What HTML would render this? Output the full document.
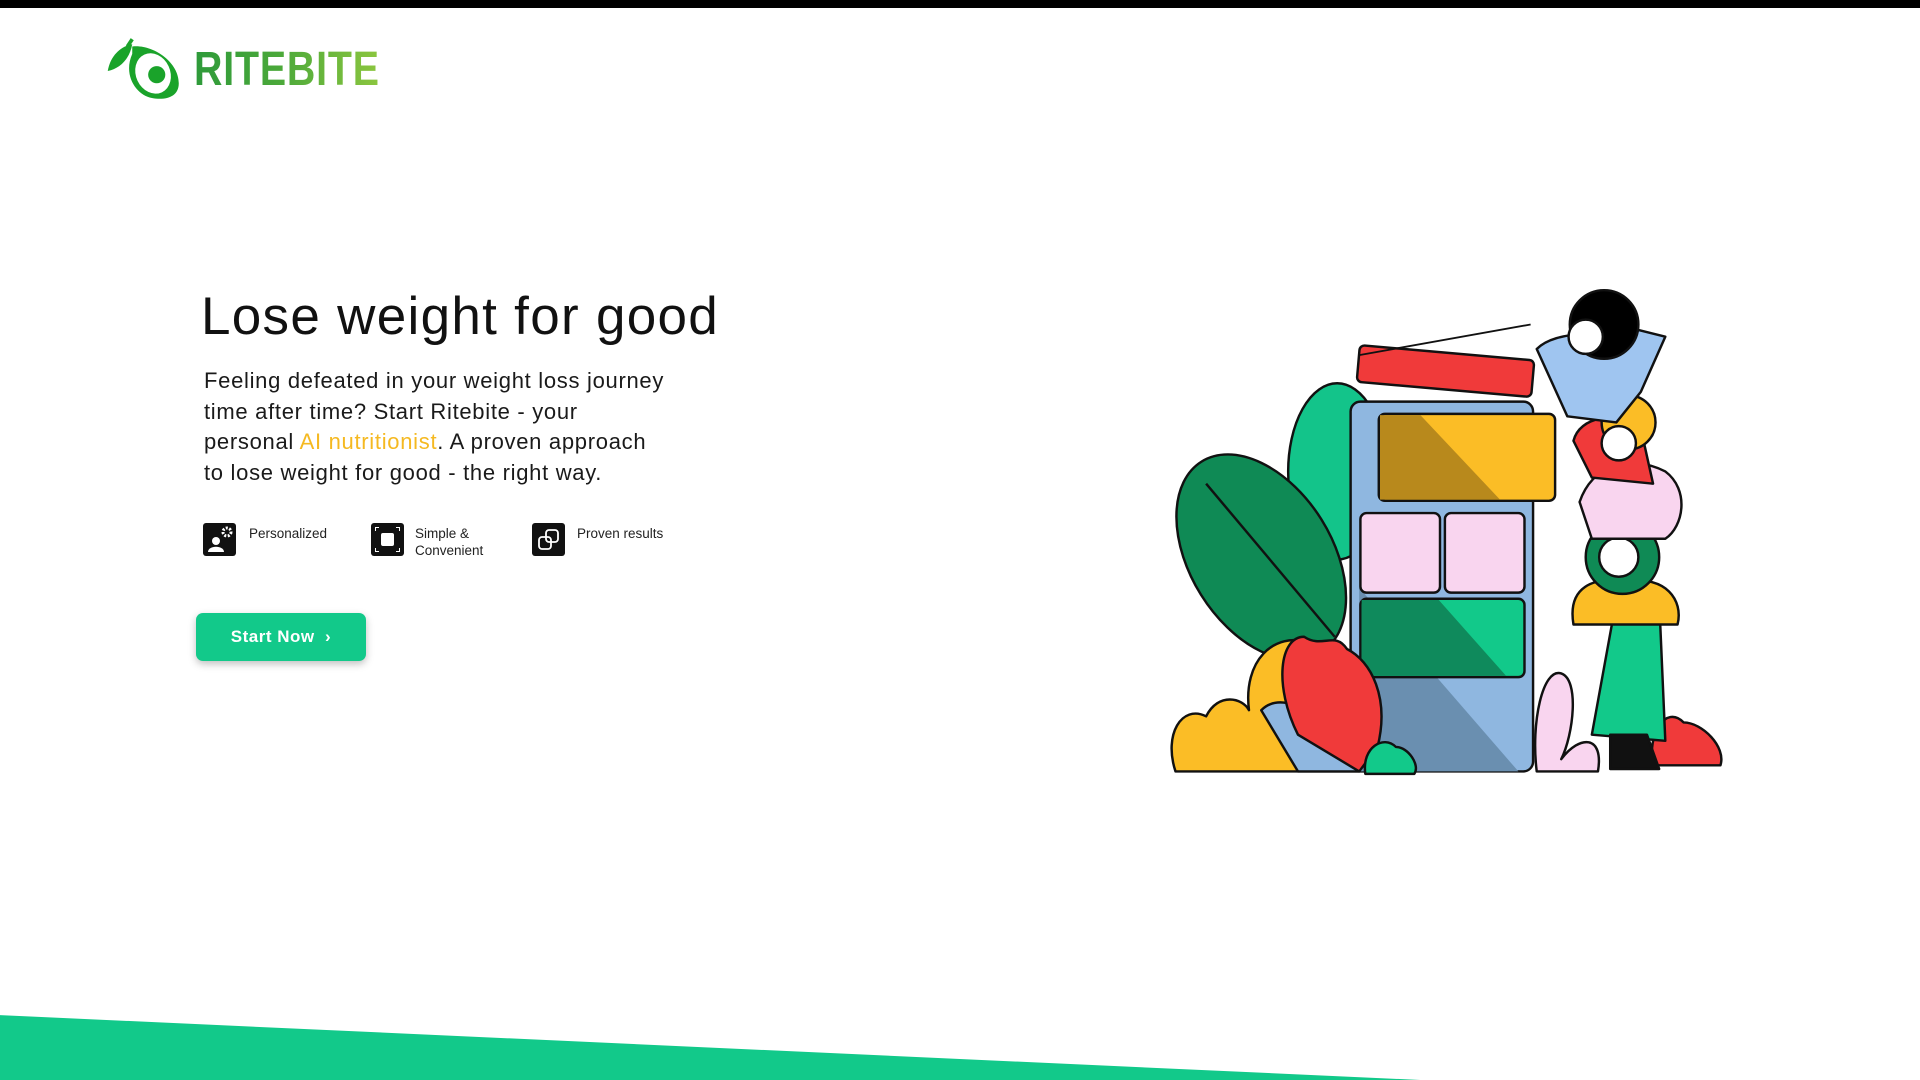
<!DOCTYPE html>
<html><head><meta charset="utf-8"><style>
*{margin:0;padding:0;box-sizing:border-box}
body{width:1920px;height:1080px;position:relative;overflow:hidden;background:#fff;font-family:"Liberation Sans",sans-serif;color:#111}
.top{position:absolute;left:0;top:0;width:1920px;height:8px;background:#000}
.logo{position:absolute;left:194px;top:42px;font-size:48px;font-weight:bold;letter-spacing:1px;transform:scaleX(0.82);transform-origin:0 0;background:linear-gradient(90deg,#2e9a3a,#4aa83a 45%,#8cc63f);-webkit-background-clip:text;color:transparent}
h1{position:absolute;left:201px;top:286px;font-size:53px;font-weight:normal;letter-spacing:1.3px}
p.d{position:absolute;left:204px;top:366px;font-size:22px;line-height:30.6px;color:#1a1a1a;letter-spacing:.7px}
p.d span{color:#f5b921}
.f{position:absolute;top:525px;font-size:13.5px;line-height:17px;color:#222}
.ic{position:absolute;top:523px;width:33px;height:33px;background:#111;border-radius:3px}
.btn{position:absolute;left:196px;top:613px;width:170px;height:48px;border-radius:7px;background:#12c98a;box-shadow:0 3px 8px rgba(0,0,0,.25);color:#fff;font-weight:bold;font-size:17px;line-height:48px;text-align:center;letter-spacing:.5px}
svg.ov{position:absolute;left:0;top:0}
</style></head><body>
<div class="top"></div>
<svg class="ov" width="1920" height="1080" viewBox="0 0 1568 882">
<polygon points="0,829 1160,882 0,882" fill="#12c98a"/>
<path d="M108 38 C124 36 146 50 146 68 C146 80 134 82 124 80 C112 78 100 62 108 44Z" fill="#1aa32a"/>
<ellipse cx="125" cy="60" rx="14" ry="17" fill="#fff" transform="rotate(-25 125 60)"/>
<circle cx="128" cy="61" r="7" fill="#1aa32a"/>
<path d="M104 38 L108 32" stroke="#1aa32a" stroke-width="3"/>
<path d="M88 58 C90 46 98 38 108 36 C106 48 98 56 88 58Z" fill="#1aa32a"/>
<g stroke="#111" stroke-width="2" stroke-linejoin="round">
<ellipse cx="1092" cy="385" rx="40" ry="72" fill="#13c48a"/>
<ellipse cx="1030" cy="455" rx="58" ry="92" transform="rotate(-32 1030 455)" fill="#0f8a55"/>
<path d="M985 395 L1090 520" fill="none"/>
<rect x="1103" y="328" width="149" height="302" rx="8" fill="#8fb7e0"/>
<path d="M1110 480 L1240 630 L1110 630Z" fill="#6a8fb0" stroke="none"/>
<rect x="1126" y="338" width="144" height="71" rx="5" fill="#fbbd26"/>
<path d="M1127 339 L1160 339 L1225 408 L1127 408Z" fill="#b8891c" stroke="none"/>
<rect x="1111" y="419" width="65" height="65" rx="5" fill="#f9d5ef"/>
<rect x="1180" y="419" width="65" height="65" rx="5" fill="#f9d5ef"/>
<rect x="1111" y="489" width="134" height="64" rx="5" fill="#12c98a"/>
<path d="M1112 490 L1175 490 L1230 552 L1112 552Z" fill="#0f8a5c" stroke="none"/>
<rect x="1109" y="288" width="143" height="30" rx="4" fill="#f03a3a" transform="rotate(5 1180 303)"/>
<path d="M1110 290 L1250 265" fill="none" stroke-width="1.5"/>
<path d="M960 630 C950 600 965 575 985 585 C995 565 1015 570 1020 580 C1015 540 1040 515 1070 525 C1095 560 1100 600 1110 630Z" fill="#fbbd26"/>
<path d="M1030 580 C1050 560 1090 590 1110 630 L1060 630Z" fill="#8fb7e0"/>
<path d="M1060 600 C1040 560 1045 520 1065 520 C1080 530 1090 515 1100 530 C1120 540 1135 570 1125 610 L1110 630Z" fill="#f03a3a"/>
<path d="M1115 632 C1112 610 1130 600 1140 610 C1150 610 1160 625 1155 632Z" fill="#12c98a"/>
<path d="M1255 630 C1250 590 1260 545 1275 550 C1290 555 1285 600 1275 620 C1290 600 1310 600 1305 630Z" fill="#f9d5ef"/>
<path d="M1350 625 C1345 600 1360 575 1375 590 C1390 590 1410 610 1405 625Z" fill="#f03a3a"/>
<path d="M1300 600 L1320 490 L1355 490 L1360 605Z" fill="#12c98a"/>
<path d="M1285 510 C1280 480 1300 470 1330 475 C1360 470 1375 490 1370 510Z" fill="#fbbd26"/>
<circle cx="1325" cy="455" r="30" fill="#0f8a55"/>
<circle cx="1322" cy="455" r="16" fill="#fff"/>
<path d="M1290 410 C1300 380 1330 370 1360 385 C1380 400 1375 430 1360 440 L1300 440Z" fill="#f9d5ef"/>
<path d="M1285 360 C1290 340 1320 335 1340 350 L1350 395 L1300 390Z" fill="#f03a3a"/>
<circle cx="1330" cy="345" r="22" fill="#fbbd26"/>
<circle cx="1322" cy="362" r="14" fill="#fff"/>
<path d="M1255 285 C1270 270 1300 275 1320 265 L1360 275 L1340 320 L1320 345 L1280 340Z" fill="#9fc5f0"/>
<circle cx="1310" cy="265" r="28" fill="#000"/>
<circle cx="1295" cy="275" r="14" fill="#fff"/>
<path d="M1315 600 L1315 628 L1355 628 L1345 600Z" fill="#111"/>
</g>
</svg>
<div class="logo">RITEBITE</div>
<h1>Lose weight for good</h1>
<p class="d">Feeling defeated in your weight loss journey<br>time after time? Start Ritebite - your<br>personal <span>AI nutritionist</span>. A proven approach<br>to lose weight for good - the right way.</p>
<div class="ic" style="left:203px"><svg width="33" height="33"><circle cx="13" cy="18" r="4" fill="#fff"/><path d="M5 29 C5 22 21 22 21 29Z" fill="#fff"/><circle cx="24" cy="9" r="4" fill="none" stroke="#fff" stroke-width="3" stroke-dasharray="2 1.5"/></svg></div>
<div class="f" style="left:249px">Personalized</div>
<div class="ic" style="left:371px"><svg width="33" height="33"><rect x="10" y="10" width="13" height="13" rx="2" fill="#fff"/><path d="M4 4h4v1H5v3H4zM29 4h-4v1h3v3h1zM4 29h4v-1H5v-3H4zM29 29h-4v-1h3v-3h1z" fill="#fff"/></svg></div>
<div class="f" style="left:415px">Simple &amp;<br>Convenient</div>
<div class="ic" style="left:532px"><svg width="33" height="33"><rect x="14" y="7" width="12" height="12" rx="3" fill="none" stroke="#fff" stroke-width="1.8"/><rect x="7" y="14" width="12" height="12" rx="3" fill="none" stroke="#fff" stroke-width="1.8"/></svg></div>
<div class="f" style="left:577px">Proven results</div>
<div class="btn">Start Now &nbsp;›</div>
</body></html>
